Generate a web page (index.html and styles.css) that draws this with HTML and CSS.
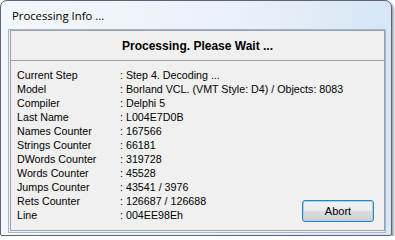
FILE: index.html
```html
<!DOCTYPE html>
<html lang="en">
<head>
    <meta charset="UTF-8">
    <title>Processing Info ...</title>
    <link rel="stylesheet" href="styles.css">
</head>
<body>
    <div class="window">
        <div class="title">Processing Info ...</div>
        <div class="client">
            <div class="header">Processing. Please Wait ...</div>
            <div class="body">
                <div class="info">
                    <span>Current Step</span><span>: Step 4. Decoding ...</span>
                    <span>Model</span><span>: Borland VCL. (VMT Style: D4) / Objects: 8083</span>
                    <span>Compiler</span><span>: Delphi 5</span>
                    <span>Last Name</span><span>: L004E7D0B</span>
                    <span>Names Counter</span><span>: 167566</span>
                    <span>Strings Counter</span><span>: 66181</span>
                    <span>DWords Counter</span><span>: 319728</span>
                    <span>Words Counter</span><span>: 45528</span>
                    <span>Jumps Counter</span><span>: 43541 / 3976</span>
                    <span>Rets Counter</span><span>: 126687 / 126688</span>
                    <span>Line</span><span>: 004EE98Eh</span>
                </div>
                <button class="abort">Abort</button>
            </div>
        </div>
    </div>
</body>
</html>
```

FILE: styles.css
```css
body {
    margin: 0;
    background-color: #fff;
    font-family: "Liberation Sans", Arial, sans-serif;
}

.window {
    width: 392px;
    height: 236px;
    box-sizing: border-box;
    border: 1px solid #5b6470;
    border-radius: 7px 7px 2px 2px;
    background: linear-gradient(to right, #f4f7fb 0%, #e9f1f9 60%, #d6e6f5 100%);
    box-shadow: 2px 2px 2px rgba(0, 0, 0, 0.35);
    display: flex;
    flex-direction: column;
    padding: 0 5px 6px 7px;
}

.title {
    height: 28px;
    line-height: 30px;
    padding-left: 4px;
    font-family: "Open Sans", "Noto Sans", sans-serif;
    font-size: 11.3px;
    color: #000;
}

.client {
    flex: 1;
    background-color: #f0f0f0;
    border: 1px solid #9fb8d1;
    display: flex;
    flex-direction: column;
    padding: 0 0 1px 1px;
}

.header {
    height: 29px;
    line-height: 31px;
    border: 1px solid #a0a0a0;
    text-align: center;
    font-weight: bold;
    font-size: 12px;
    color: #000;
}

.body {
    flex: 1;
    border: 1px solid #a0a0a0;
    border-top: none;
    display: grid;
    grid-template-columns: minmax(0, 1fr) auto;
    padding: 7px 10px 8px 6px;
}

.info {
    display: grid;
    grid-template-columns: 103px auto;
    grid-auto-rows: 14px;
    font-size: 10.7px;
    line-height: 14px;
    white-space: nowrap;
    color: #000;
}

.abort {
    align-self: end;
    width: 72px;
    height: 22px;
    border: 1px solid #3c7fb1;
    border-radius: 3px;
    box-shadow: inset 0 0 0 1px #8fd8f8;
    background: linear-gradient(to bottom, #f2f2f2 0%, #ebebeb 50%, #dddddd 51%, #cfcfcf 100%);
    font-family: "Liberation Sans", Arial, sans-serif;
    font-size: 11px;
    color: #000;
    padding: 0;
}
```
